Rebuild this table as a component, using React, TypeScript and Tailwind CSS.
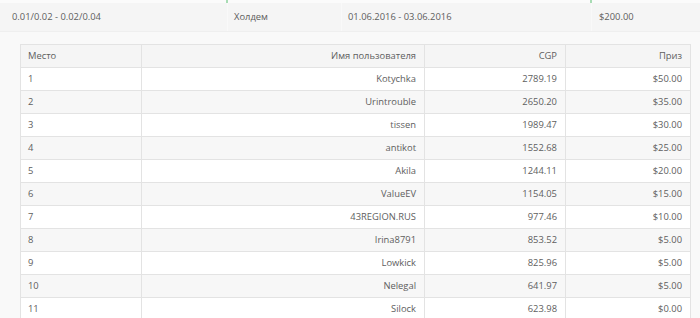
import React from "react";

const rows: [string, string, string, string][] = [
  ["1", "Kotychka", "2789.19", "$50.00"],
  ["2", "Urintrouble", "2650.20", "$35.00"],
  ["3", "tissen", "1989.47", "$30.00"],
  ["4", "antikot", "1552.68", "$25.00"],
  ["5", "Akila", "1244.11", "$20.00"],
  ["6", "ValueEV", "1154.05", "$15.00"],
  ["7", "43REGION.RUS", "977.46", "$10.00"],
  ["8", "Irina8791", "853.52", "$5.00"],
  ["9", "Lowkick", "825.96", "$5.00"],
  ["10", "Nelegal", "641.97", "$5.00"],
  ["11", "Silock", "623.98", "$0.00"],
];

export default function App() {
  return (
    <div
      className="w-[700px] h-[318px] overflow-hidden bg-[#f9f9f9] text-[#5e5e5e] text-[9.4px]"
      style={{ fontFamily: '"Open Sans", "Liberation Sans", sans-serif' }}
    >
      <div className="relative h-[3px] bg-[#fbfbfb]">
        <span className="absolute left-[226px] top-0 h-[3px] w-[2px] bg-[#a8dcb4]" />
        <span className="absolute left-[590px] top-0 h-[3px] w-[2px] bg-[#a8dcb4]" />
      </div>
      <div className="flex h-[29px] items-center bg-[#f5f5f5] border-b border-[#efefef]">
        <div className="w-[227px] h-full flex items-center pl-[12px]">0.01/0.02 - 0.02/0.04</div>
        <div className="w-[114px] h-full flex items-center pl-[6px] border-l border-[#f9f9f9]">Холдем</div>
        <div className="w-[250px] h-full flex items-center pl-[6px] border-l border-[#f9f9f9]">01.06.2016 - 03.06.2016</div>
        <div className="flex-1 h-full flex items-center pl-[7px] border-l border-[#f9f9f9]">$200.00</div>
      </div>
      <div className="pt-[12px] pl-[20px]">
        <table className="border-collapse w-[670px] table-fixed">
          <colgroup>
            <col className="w-[121px]" />
            <col className="w-[283px]" />
            <col className="w-[141px]" />
            <col className="w-[125px]" />
          </colgroup>
          <thead>
            <tr className="h-[23px] bg-[#f5f5f5]">
              <th className="border border-[#e3e3e3] font-normal text-left px-[7px]">Место</th>
              <th className="border border-[#e3e3e3] font-normal text-right px-[8px]">Имя пользователя</th>
              <th className="border border-[#e3e3e3] font-normal text-right px-[8px]">CGP</th>
              <th className="border border-[#e3e3e3] font-normal text-right px-[8px]">Приз</th>
            </tr>
          </thead>
          <tbody>
            {rows.map((r, i) => (
              <tr key={r[0]} className={i % 2 === 0 ? "h-[23px] bg-white" : "h-[23px] bg-[#f7f7f7]"}>
                <td className="border border-[#e3e3e3] text-left px-[7px]">{r[0]}</td>
                <td className="border border-[#e3e3e3] text-right px-[8px]">{r[1]}</td>
                <td className="border border-[#e3e3e3] text-right px-[8px]">{r[2]}</td>
                <td className="border border-[#e3e3e3] text-right px-[8px]">{r[3]}</td>
              </tr>
            ))}
          </tbody>
        </table>
      </div>
    </div>
  );
}
